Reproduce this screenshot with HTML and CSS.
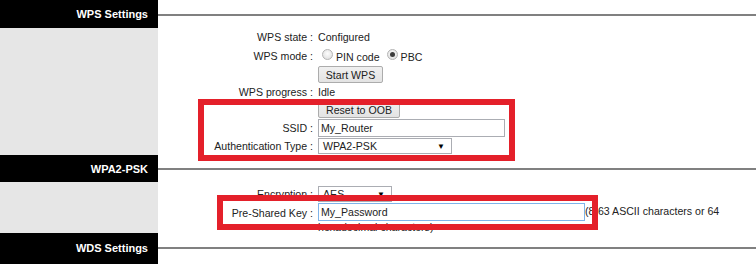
FILE: index.html
```html
<!DOCTYPE html>
<html lang="en">
<head>
  <meta charset="UTF-8" />
  <title>Wireless Security</title>
  <link rel="stylesheet" href="styles.css">
</head>
<body>

  <div class="page">

    <!-- WPS -->
    <div class="section-head head-wps">
      <div class="head-title">WPS Settings</div>
      <div class="head-line"></div>
    </div>
    <div class="section-body">
      <div class="side"></div>
      <div class="form">
        <div class="row h18">
          <span class="label">WPS state :</span>
          <span class="value">Configured</span>
        </div>
        <div class="row h20">
          <span class="label">WPS mode :</span>
          <span class="value radios">
            <span class="radio"></span><span class="radio-text">PIN code</span>
            <span class="radio checked"></span><span class="radio-text">PBC</span>
          </span>
        </div>
        <div class="row h17">
          <span class="label"></span>
          <span class="value"><button class="btn btn-start">Start WPS</button></span>
        </div>
        <div class="row h18">
          <span class="label">WPS progress :</span>
          <span class="value">Idle</span>
        </div>
        <div class="row h17">
          <span class="label"></span>
          <span class="value"><button class="btn btn-reset">Reset to OOB</button></span>
        </div>
        <div class="row h19">
          <span class="label">SSID :</span>
          <span class="value"><input class="text-input ssid" type="text" value="My_Router"></span>
        </div>
        <div class="row h18">
          <span class="label">Authentication Type :</span>
          <span class="value">
            <span class="select auth"><span>WPA2-PSK</span><span class="arrow">▼</span></span>
          </span>
        </div>
      </div>
    </div>

    <!-- WPA2-PSK -->
    <div class="section-head head-psk">
      <div class="head-title">WPA2-PSK</div>
      <div class="head-line"></div>
    </div>
    <div class="section-body">
      <div class="side"></div>
      <div class="form form-psk">
        <div class="row h18">
          <span class="label">Encryption :</span>
          <span class="value">
            <span class="select enc"><span>AES</span><span class="arrow">▼</span></span>
          </span>
        </div>
        <div class="row row-key">
          <span class="label">Pre-Shared Key :</span>
          <span class="value key-value"><input class="text-input key" type="text" value="My_Password">(8-63 ASCII characters or 64 hexadecimal characters)</span>
        </div>
      </div>
    </div>

    <!-- WDS -->
    <div class="section-head head-wds">
      <div class="head-title">WDS Settings</div>
      <div class="head-line"></div>
    </div>

    <!-- annotation boxes -->
    <div class="mark mark-ssid"></div>
    <div class="mark mark-key"></div>
  </div>

</body>
</html>
```

FILE: styles.css
```css
* {
  box-sizing: border-box;
  margin: 0;
  padding: 0;
}

body {
  font-family: 'Liberation Sans', Arial, sans-serif;
  font-size: 10.6px;
  color: #222;
  background: #fff;
}

.page {
  position: relative;
  width: 756px;
  height: 264px;
  overflow: hidden;
}

/* section headers */
.section-head {
  display: grid;
  grid-template-columns: 158px 1fr;
  height: 28px;
}

.head-psk {
  height: 27px;
}

.head-wds {
  height: 31px;
}

.head-title {
  background: #000;
  color: #fff;
  font-weight: bold;
  font-size: 11px;
  text-align: right;
  padding-right: 10px;
  display: flex;
  align-items: center;
  justify-content: flex-end;
}

.head-wds .head-title {
  align-items: flex-start;
  padding-top: 9px;
}

.head-line {
  display: flex;
  align-items: center;
  padding-top: 1px;
}

.head-wds .head-line {
  align-items: flex-start;
  padding-top: 14px;
}

.head-line::after {
  content: '';
  flex: 1;
  height: 2px;
  background: #808080;
}

/* section bodies */
.section-body {
  display: grid;
  grid-template-columns: 158px 1fr;
}

.side {
  background: #e6e6e6;
}

.form-psk {
  padding-top: 3px;
}

.row {
  display: grid;
  grid-template-columns: 155px 1fr;
  column-gap: 5px;
  align-items: center;
}

.h17 { height: 17px; }
.h18 { height: 18px; }
.h19 { height: 19px; }
.h20 { height: 20px; }

.label {
  text-align: right;
  white-space: nowrap;
}

.value {
  display: flex;
  align-items: center;
}

/* radios */
.radios {
  padding-left: 4px;
}

.radio {
  width: 11px;
  height: 11px;
  border-radius: 50%;
  border: 1px solid #b4b4b4;
  background: radial-gradient(circle at 50% 40%, #fdfdfd 0%, #e4e4e4 70%, #d0d0d0 100%);
  display: flex;
  align-items: center;
  justify-content: center;
  margin-top: -3px;
}

.radio.checked::after {
  content: '';
  width: 5px;
  height: 5px;
  border-radius: 50%;
  background: #3c3c3c;
}

.radio-text {
  margin: 2px 7px 0 3px;
}

/* buttons */
.btn {
  font-family: inherit;
  font-size: 10.6px;
  color: #222;
  height: 17px;
  padding: 0;
  white-space: nowrap;
  border: 1px solid #acacac;
  border-radius: 2px;
  background: linear-gradient(#f0f0f0, #e3e3e3);
}

.btn-start {
  width: 65px;
}

.btn-reset {
  width: 82px;
}

/* inputs */
.text-input {
  font-family: inherit;
  font-size: 10.6px;
  color: #222;
  height: 18px;
  border: 1px solid #abadb3;
  padding: 0 2px;
  background: #fff;
  outline: none;
}

.ssid {
  width: 187px;
}

.select {
  display: flex;
  align-items: center;
  justify-content: space-between;
  height: 16px;
  border: 1px solid #abadb3;
  padding: 0 6px 0 4px;
  background: #fff;
}

.arrow {
  font-size: 8px;
  color: #000;
}

.auth {
  width: 134px;
}

.enc {
  width: 74px;
}

.row-key {
  align-items: start;
}

.row-key .label {
  padding-top: 4px;
}

.key-value {
  display: block;
  line-height: 12px;
  padding-right: 20px;
}

.key {
  width: 267px;
  height: 18px;
  border-color: #7eb4ea;
  vertical-align: middle;
}

/* red annotation boxes */
.mark {
  position: absolute;
  border: 6px solid #e4202a;
}

.mark-ssid {
  left: 198px;
  top: 99px;
  width: 317px;
  height: 62px;
}

.mark-key {
  left: 217px;
  top: 195px;
  width: 381px;
  height: 35px;
}
```
